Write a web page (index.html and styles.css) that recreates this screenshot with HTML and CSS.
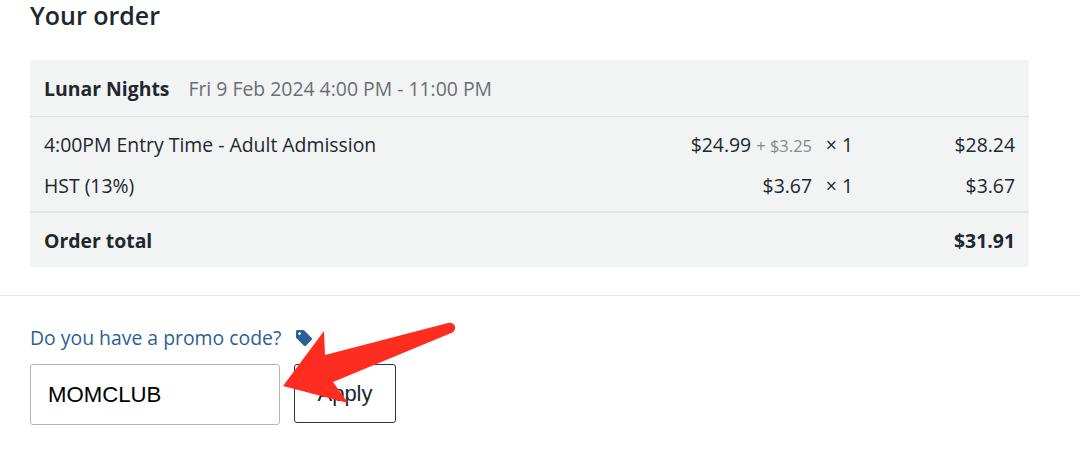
FILE: index.html
```html
<!DOCTYPE html>
<html lang="en">
<head>
<meta charset="utf-8">
<title>Your order</title>
<link rel="stylesheet" href="styles.css">
</head>
<body>
<section class="order">
  <h2 class="title">Your order</h2>
  <div class="panel">
    <div class="event"><strong>Lunar Nights</strong><span class="date">Fri 9 Feb 2024 4:00 PM - 11:00 PM</span></div>
    <div class="items">
      <div class="row">
        <span class="name">4:00PM Entry Time - Adult Admission</span>
        <span class="price">$24.99 <small>+ $3.25</small></span>
        <span class="qty">× 1</span>
        <span class="sum">$28.24</span>
      </div>
      <div class="row">
        <span class="name">HST (13%)</span>
        <span class="price">$3.67</span>
        <span class="qty">× 1</span>
        <span class="sum">$3.67</span>
      </div>
    </div>
    <div class="total"><span>Order total</span><span>$31.91</span></div>
  </div>
</section>
<section class="promo">
  <a class="promo-link" href="#">Do you have a promo code?
    <svg class="tag" viewBox="0 0 18 18" aria-hidden="true"><path d="M1 2.600C1 1.700 1.700 1 2.600 1H8c.5 0 1 .2 1.300.5l7.200 7.200c.7.7.7 1.700 0 2.400l-5.400 5.400c-.7.7-1.700.7-2.400 0L1.500 9.300C1.200 9 1 8.500 1 8z M4.600 3.200a1.400 1.400 0 1 0 .01 0z" fill-rule="evenodd"/></svg>
  </a>
  <div class="promo-form">
    <input class="code" type="text" value="MOMCLUB">
    <button class="apply" type="button">Apply</button>
  </div>
  <svg class="arrow" viewBox="0 0 180 90" aria-hidden="true"><path d="M3 66 L44 11 L45 35 L168 3 C173 2 176 6 175 9 C174 12 172 13 170 13.500 L53 62 L68 83 Z"/></svg>
</section>
</body>
</html>
```
FILE: styles.css
```css
* { box-sizing: border-box; }
html, body { margin: 0; background: #fff; }
body {
  width: 1080px;
  height: 459px;
  overflow: hidden;
  font-family: "Open Sans", sans-serif;
  font-size: 19.4px;
  color: #20272e;
}
.order {
  padding: 0 51px 28px 30px;
  border-bottom: 1px solid #e4e6e6;
}
.title {
  margin: 0 0 26px;
  height: 34px;
  font-size: 25px;
  line-height: 30px;
  font-weight: 600;
}
.panel {
  background: #f2f4f4;
  border-radius: 2px;
}
.event {
  display: flex;
  align-items: center;
  height: 57px;
  padding: 0 14px;
  border-bottom: 1px solid #dfe1e1;
}
.event strong { font-weight: 700; }
.date { margin-left: 19px; color: #6a6e72; }
.items { padding: 7px 14px 5px; border-bottom: 2px solid #e2e4e4; }
.row {
  display: flex;
  align-items: center;
  height: 41px;
}
.name { flex: 1; }
.price { text-align: right; }
.price small { font-size: 16.5px; color: #85898c; }
.qty { width: 41px; text-align: right; }
.sum { width: 162px; text-align: right; }
.total {
  display: flex;
  justify-content: space-between;
  align-items: center;
  height: 54px;
  padding: 0 14px;
  font-weight: 700;
}
.promo { position: relative; padding: 27px 30px 0; }
.promo-link {
  display: flex;
  align-items: center;
  height: 28px;
  color: #2e6095;
  text-decoration: none;
}
.tag { width: 18px; height: 18px; margin: 0 0 -1px 14px; fill: #2c6198; }
.promo-form { display: flex; gap: 14px; margin-top: 13px; }
.code {
  width: 250px;
  height: 61px;
  padding: 0 17px;
  border: 1px solid #b5b5b5;
  border-radius: 3px;
  background: #fff;
  font-family: "Liberation Sans", Arial, sans-serif;
  font-size: 22.2px;
  color: #000;
  outline: none;
}
.apply {
  width: 102px;
  height: 59px;
  border: 1px solid #2b3540;
  border-radius: 3px;
  background: #fff;
  font-family: "Liberation Sans", Arial, sans-serif;
  font-size: 22px;
  color: #20272e;
}
.arrow {
  position: absolute;
  left: 280px;
  top: 24px;
  width: 180px;
  height: 90px;
  fill: #ff2d20;
}
```
